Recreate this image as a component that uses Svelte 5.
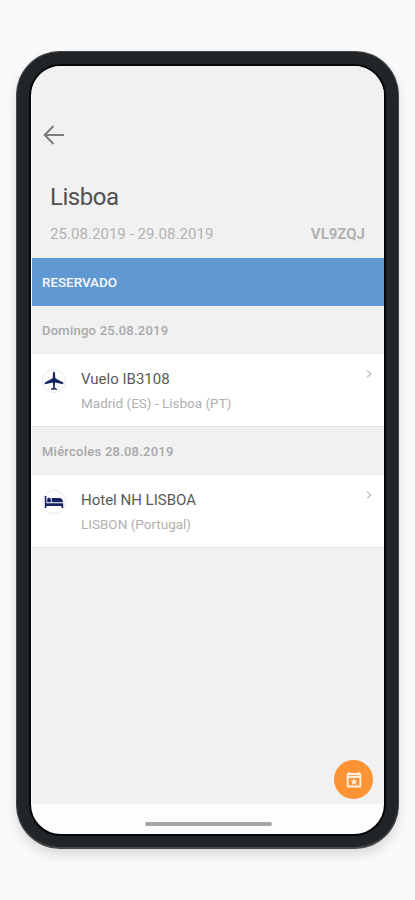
<script>
	const locator = "VL9ZQJ";

	const days = [
		{
			label: "Domingo 25.08.2019",
			items: [{ icon: "flight", title: "Vuelo IB3108", place: "Madrid (ES) - Lisboa (PT)" }],
		},
		{
			label: "Miércoles 28.08.2019",
			items: [{ icon: "hotel", title: "Hotel NH LISBOA", place: "LISBON (Portugal)" }],
		},
	];
</script>

<main>
	<div class="phone">
		<div class="screen">
			<div class="content">
				<header>
					<button class="back" aria-label="Volver">
						<svg viewBox="0 0 22 20" width="22" height="20">
							<path d="M21 10H2M10.5 1 1.7 10l8.8 9" />
						</svg>
					</button>
					<h1>Lisboa</h1>
					<div class="summary">
						<span>25.08.2019 - 29.08.2019</span>
						<strong>{locator}</strong>
					</div>
				</header>

				<div class="status"><span>RESERVADO</span></div>

				{#each days as day}
					<h2><span>{day.label}</span></h2>
					{#each day.items as item}
						<div class="item">
							<div class="icon">
								{#if item.icon === "flight"}
									<svg viewBox="0 0 20 20" width="20" height="20">
										<path
											d="M10 .5c-.6 0-.9.9-1 2l-.3 4.7L.8 11.6v1.7l8.1-1.9.4 5-2.3 1.6v1.1l3-.6 3 .6V18l-2.3-1.6.4-5 8.1 1.9v-1.7l-7.9-4.4L11 2.5c-.1-1.1-.4-2-1-2z"
										/>
									</svg>
								{:else}
									<svg viewBox="0 0 20 20" width="20" height="20">
										<path
											d="M.8 4h1.6v7.2h16.8V16h-1.7v-2H2.4v2H.8zM3.2 7.5c0-2.4 3.4-2.4 3.7 0v2.7H3.2zM7.7 6h7.8c2.1 0 3.3 1.2 3.5 4.2H7.7z"
										/>
									</svg>
								{/if}
							</div>
							<div class="text">
								<h3>{item.title}</h3>
								<p>{item.place}</p>
							</div>
							<svg class="chevron" viewBox="0 0 6 8" width="6" height="8">
								<path d="m1 .7 3.8 3.3L1 7.3" />
							</svg>
						</div>
					{/each}
				{/each}

				<button class="fab" aria-label="Calendario">
					<svg viewBox="0 0 16 16" width="16" height="16">
						<path
							fill-rule="evenodd"
							d="M2.3 0h1.8v1h7.8V0h1.8v1c.8 0 1.6.6 1.6 1.4v11.4c0 .9-.7 1.6-1.6 1.6H2.3c-.9 0-1.6-.7-1.6-1.6V2.4C.7 1.6 1.5 1 2.3 1zM2.6 3.2v.9h10.8v-.9zM2.6 6v7.5h10.8V6z"
						/>
						<path d="m8 6.3 1 2.2 2.4.2-1.8 1.6.6 2.4L8 11.5l-2.2 1.2.6-2.4-1.8-1.6L7 8.5z" />
					</svg>
				</button>
			</div>
			<div class="nav"><i></i></div>
		</div>
	</div>
</main>

<style>
	:global(body) {
		margin: 0;
		background: #fafafa;
	}
	main {
		box-sizing: border-box;
		height: 900px;
		padding: 51px 16px 0;
		font-family: Roboto, "Liberation Sans", sans-serif;
	}
	.phone {
		box-sizing: border-box;
		width: 383px;
		height: 798px;
		padding: 12px;
		border: 1px solid #444749;
		border-bottom: 2px solid #4a4a4a;
		border-radius: 44px;
		background: #222527;
		box-shadow: 0 6px 12px rgba(0, 0, 0, 0.13);
	}
	.screen {
		box-sizing: border-box;
		display: flex;
		flex-direction: column;
		height: 772px;
		border: 2px solid #050607;
		border-radius: 32px;
		background: #fdfdfd;
		overflow: hidden;
	}
	.content {
		position: relative;
		height: 738px;
		margin-left: 1px;
		background: #f1f1f1;
	}
	header {
		box-sizing: border-box;
		height: 192px;
		padding: 59px 19px 0 18px;
	}
	button {
		display: block;
		padding: 0;
		border: 0;
		background: none;
	}
	.back {
		height: 20px;
		margin-left: -7px;
	}
	.back svg {
		display: block;
		fill: none;
		stroke: #7d7d7d;
		stroke-width: 2;
	}
	h1,
	h2,
	h3,
	p {
		margin: 0;
		font-weight: 400;
	}
	h1 {
		margin-top: 38px;
		color: #505050;
		font-size: 24px;
		line-height: 28px;
		letter-spacing: -0.45px;
	}
	.summary {
		display: flex;
		justify-content: space-between;
		margin-top: 13px;
		color: #b1b1b1;
		font-size: 15px;
		line-height: 20px;
	}
	.summary span {
		letter-spacing: 0.05px;
	}
	.status {
		display: flex;
		align-items: center;
		height: 48px;
		padding-left: 10px;
		background: #6099d1;
		color: #f6faff;
		font-size: 13.4px;
		font-weight: 500;
	}
	h2 {
		box-sizing: border-box;
		display: flex;
		align-items: center;
		height: 48px;
		padding: 1px 0 0 10px;
		border-bottom: 1px solid #e9e9e9;
		color: #a8a8a8;
		font-size: 13px;
		font-weight: 500;
		letter-spacing: 0.24px;
	}
	.item {
		box-sizing: border-box;
		display: flex;
		align-items: flex-start;
		height: 73px;
		padding: 14px 12px 0 10px;
		border-bottom: 1px solid #e2e2e2;
		background: #fff;
	}
	.icon {
		box-sizing: border-box;
		display: flex;
		align-items: center;
		justify-content: center;
		width: 24px;
		height: 24px;
		margin-top: 1px;
		border: 1px solid #e5eaf0;
		border-radius: 50%;
	}
	.icon svg {
		flex: none;
		fill: #14235f;
	}
	.text {
		flex: 1;
		margin-left: 15px;
	}
	h3 {
		color: #5a5a5a;
		font-size: 15px;
		line-height: 22px;
	}
	p {
		margin-top: 3px;
		color: #b0b0b0;
		font-size: 13.5px;
		line-height: 20px;
	}
	.chevron {
		margin-top: 2px;
		fill: none;
		stroke: #c0c0c0;
		stroke-width: 1.3;
	}
	.fab {
		position: absolute;
		right: 11px;
		bottom: 5px;
		display: flex;
		align-items: center;
		justify-content: center;
		width: 39px;
		height: 39px;
		border-radius: 50%;
		background: #fd9334;
	}
	.fab svg {
		fill: #fff0df;
	}
	.nav {
		display: flex;
		justify-content: center;
		padding: 18px 0 0 2px;
	}
	.nav i {
		width: 127px;
		height: 4px;
		border-radius: 2px;
		background: #a5a5a5;
	}
</style>
